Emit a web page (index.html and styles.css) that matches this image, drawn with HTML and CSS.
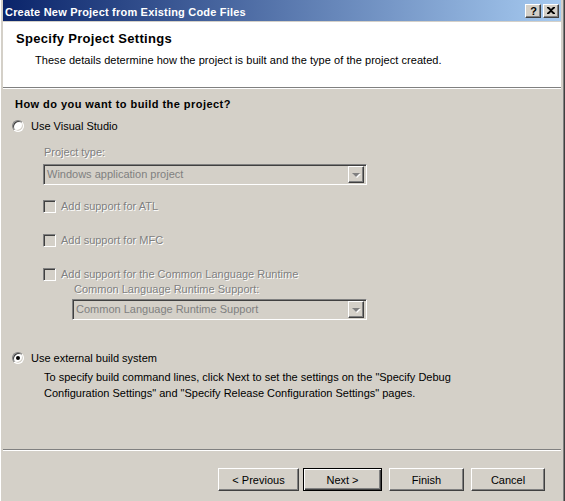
FILE: index.html
```html
<!DOCTYPE html>
<html>
<head>
<meta charset="utf-8">
<link rel="stylesheet" href="styles.css">
</head>
<body>
<div class="window">
  <div class="titlebar">
    <span class="title">Create New Project from Existing Code Files</span>
    <div class="tb-buttons">
      <span class="tbtn help">?</span>
      <span class="tbtn close"><svg width="8" height="7" viewBox="0 0 8 7"><path d="M0 0h2l2 2 2-2h2v1L5 3.5 8 6v1H6L4 5 2 7H0V6l3-2.5L0 1z" fill="#000"/></svg></span>
    </div>
  </div>
  <div class="client">
    <div class="header">
      <div class="h-title">Specify Project Settings</div>
      <div class="h-sub">These details determine how the project is built and the type of the project created.</div>
    </div>
    <div class="etch"></div>
    <div class="main">
      <div class="question">How do you want to build the project?</div>
      <div class="radio-row r1"><span class="radio"></span><span class="lbl">Use Visual Studio</span></div>
      <div class="vs-opts">
        <div class="dis-label ptype">Project type:</div>
        <div class="combo c1"><span class="combo-text">Windows application project</span><span class="drop"><span class="arrow"></span></span></div>
        <div class="check-row ck1"><span class="check"></span><span class="dis-text">Add support for ATL</span></div>
        <div class="check-row ck2"><span class="check"></span><span class="dis-text">Add support for MFC</span></div>
        <div class="check-row ck3"><span class="check"></span><span class="dis-text">Add support for the Common Language Runtime</span></div>
        <div class="clr">
          <div class="dis-label clr-label">Common Language Runtime Support:</div>
          <div class="combo c2"><span class="combo-text">Common Language Runtime Support</span><span class="drop"><span class="arrow"></span></span></div>
        </div>
      </div>
      <div class="radio-row r2"><span class="radio checked"></span><span class="lbl">Use external build system</span></div>
      <p class="desc">To specify build command lines, click Next to set the settings on the "Specify Debug Configuration Settings" and "Specify Release Configuration Settings" pages.</p>
    </div>
    <div class="etch"></div>
    <div class="footer">
      <button class="btn prev">&lt; Previous</button>
      <button class="btn next default">Next &gt;</button>
      <button class="btn finish">Finish</button>
      <button class="btn cancel">Cancel</button>
    </div>
  </div>
</div>
</body>
</html>
```
FILE: styles.css
```css
* { box-sizing: border-box; }
html, body { margin: 0; padding: 0; }
body {
  width: 565px;
  height: 501px;
  overflow: hidden;
  background: #d4d0c8;
  font-family: "Liberation Sans", Arial, sans-serif;
  font-size: 11px;
  color: #000;
}
.window {
  width: 565px;
  height: 501px;
  display: flex;
  flex-direction: column;
  border-left: 1px solid #fff;
  box-shadow: inset 1px 0 0 #d4d0c8;
  padding-left: 1px;
  padding-right: 3px;
  border-right: 1px solid #404040;
  position: relative;
}
.window::after {
  content: "";
  position: absolute;
  right: 0;
  top: 0;
  bottom: 0;
  width: 1px;
  background: #808080;
}
.titlebar {
  height: 21px;
  flex: none;
  display: flex;
  align-items: center;
  justify-content: space-between;
  background: linear-gradient(to right, #0a246a, #a6caf0);
  padding: 0 2px 0 2px;
  margin-left: 1px;
}
.title {
  color: #fff;
  font-weight: bold;
  font-size: 11px;
  letter-spacing: 0.2px;
  padding-top: 2px;
}
.tb-buttons { display: flex; gap: 2px; margin-top: 1px; }
.tbtn {
  width: 16px;
  height: 14px;
  background: #d4d0c8;
  border: 1px solid;
  border-color: #fff #404040 #404040 #fff;
  box-shadow: inset -1px -1px 0 #808080;
  display: flex;
  align-items: center;
  justify-content: center;
  font-weight: bold;
  font-size: 11px;
  line-height: 12px;
}
.tbtn.help { padding-left: 1px; }
.tbtn.close svg { display: block; margin-top: -1px; }
.client {
  flex: 1;
  display: flex;
  flex-direction: column;
  margin-top: 1px;
  margin-left: 1px;
}
.header {
  background: #fff;
  height: 65px;
  flex: none;
  padding: 9px 0 0 13px;
}
.h-title {
  font-weight: bold;
  font-size: 13px;
  line-height: 16px;
  letter-spacing: 0.3px;
}
.h-sub {
  margin: 7px 0 0 19px;
  line-height: 13px;
  letter-spacing: 0.05px;
}
.etch {
  flex: none;
  height: 2px;
  border-top: 1px solid #808080;
  border-bottom: 1px solid #fff;
}
.main {
  height: 360px;
  flex: none;
  display: flex;
  flex-direction: column;
  padding-left: 9px;
}
.question {
  font-weight: bold;
  line-height: 13px;
  margin-top: 9px;
  padding-left: 3px;
  letter-spacing: 0.45px;
}
.radio-row {
  display: flex;
  align-items: center;
  height: 12px;
}
.r1 { margin-top: 9px; }
.r2 { margin-top: 32px; }
.radio {
  width: 12px;
  height: 12px;
  border-radius: 50%;
  background: #fff;
  border: 1px solid;
  border-color: #808080 #fff #fff #808080;
  box-shadow: inset 1px 1px 0 #404040, inset -1px -1px 0 #d4d0c8;
  position: relative;
  flex: none;
}
.radio.checked::after {
  content: "";
  position: absolute;
  width: 4px;
  height: 4px;
  border-radius: 50%;
  background: #000;
  left: 3px;
  top: 3px;
}
.lbl { margin-left: 7px; line-height: 13px; }
.vs-opts { padding-left: 31px; display: flex; flex-direction: column; }
.dis-label, .dis-text {
  color: #808080;
  text-shadow: 1px 1px 0 #fff;
  line-height: 13px;
}
.ptype { margin-top: 14px; padding-left: 1px; }
.combo {
  height: 21px;
  width: 324px;
  border: 1px solid;
  border-color: #808080 #fff #fff #808080;
  box-shadow: inset 1px 1px 0 #404040, inset -1px -1px 0 #d4d0c8;
  display: flex;
  align-items: center;
  justify-content: space-between;
  padding: 2px;
  color: #808080;
}
.c1 { margin-top: 5px; }
.combo-text { padding-left: 1px; line-height: 13px; }
.drop {
  width: 16px;
  height: 17px;
  border: 1px solid;
  border-color: #fff #404040 #404040 #fff;
  box-shadow: inset -1px -1px 0 #808080;
  display: flex;
  align-items: center;
  justify-content: center;
}
.arrow {
  width: 0;
  height: 0;
  border-left: 4px solid transparent;
  border-right: 4px solid transparent;
  border-top: 4px solid #808080;
  filter: drop-shadow(1px 1px 0 #fff);
  margin-top: 1px;
}
.check-row { display: flex; align-items: center; height: 13px; }
.ck1 { margin-top: 15px; }
.ck2, .ck3 { margin-top: 21px; }
.check {
  width: 13px;
  height: 13px;
  flex: none;
  border: 1px solid;
  border-color: #808080 #fff #fff #808080;
  box-shadow: inset 1px 1px 0 #404040, inset -1px -1px 0 #d4d0c8;
  background: #d4d0c8;
  margin-right: 5px;
}
.clr { padding-left: 29px; }
.clr-label { margin-top: 2px; padding-left: 2px; }
.c2 { margin-top: 3px; width: 295px; }
.desc {
  margin: 5px 0 0 32px;
  line-height: 16px;
  width: 430px;
}
.footer {
  flex: 1;
  display: flex;
  justify-content: flex-end;
  align-items: flex-start;
  padding: 17px 16px 0 0;
}
.btn {
  font-family: "Liberation Sans", Arial, sans-serif;
  font-size: 11px;
  color: #000;
  height: 23px;
  width: 75px;
  background: #d4d0c8;
  border: 1px solid;
  border-color: #fff #404040 #404040 #fff;
  box-shadow: inset -1px -1px 0 #808080;
  padding: 0;
  margin: 0;
}
.prev { width: 81px; margin-right: 4px; }
.next { width: 79px; margin-right: 7px; }
.finish { margin-right: 7px; }
.cancel { width: 74px; }
.btn.default {
  border: 1px solid #000;
  box-shadow: inset 1px 1px 0 #fff, inset -1px -1px 0 #404040, inset -2px -2px 0 #808080;
}
```
